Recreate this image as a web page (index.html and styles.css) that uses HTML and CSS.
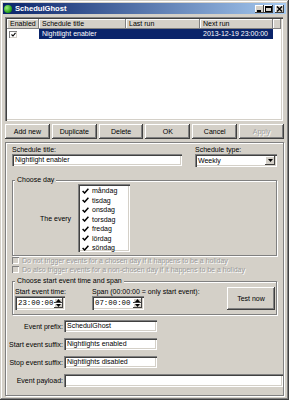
FILE: index.html
```html
<!DOCTYPE html>
<html lang="en">
<head>
    <meta charset="UTF-8">
    <title>SchedulGhost</title>
    <link rel="stylesheet" href="styles.css">
</head>
<body>
    <div class="window">
        <div class="titlebar">
            <span class="app-icon"></span>
            <span class="title">SchedulGhost</span>
            <div class="caption-buttons">
                <span class="cap-btn"><svg width="7" height="6" viewBox="0 0 7 6"><rect x="1" y="4" width="4" height="2" fill="#000"/></svg></span>
                <span class="cap-btn"><svg width="7" height="6" viewBox="0 0 7 6"><rect x="0.5" y="0.5" width="6" height="5" fill="none" stroke="#000"/><rect x="0" y="0" width="7" height="2" fill="#000"/></svg></span>
                <span class="cap-btn close"><svg width="7" height="6" viewBox="0 0 7 6"><path d="M1 0.5 L6 5.5 M6 0.5 L1 5.5" stroke="#000" stroke-width="1.4"/></svg></span>
            </div>
        </div>

        <div class="list">
            <div class="list-grid">
                <div class="head">Enabled</div>
                <div class="head">Schedule title</div>
                <div class="head">Last run</div>
                <div class="head">Next run</div>
                <div class="head"></div>

                <div class="cell check-cell">
                    <span class="cbox"><svg width="5" height="5" viewBox="0 0 5 5"><path d="M0.5 2.5 L2 4 L4.5 0.8" fill="none" stroke="#000" stroke-width="1.1"/></svg></span>
                </div>
                <div class="cell sel">Nightlight enabler</div>
                <div class="cell sel"></div>
                <div class="cell sel">2013-12-19 23:00:00</div>
                <div class="cell"></div>
            </div>
        </div>

        <div class="button-row">
            <button class="btn">Add new</button>
            <button class="btn">Duplicate</button>
            <button class="btn">Delete</button>
            <button class="btn">OK</button>
            <button class="btn">Cancel</button>
            <button class="btn" disabled>Apply</button>
        </div>

        <div class="panel">
            <div class="top-row">
                <div class="field">
                    <div class="label">Schedule title:</div>
                    <div class="textbox">Nightlight enabler</div>
                </div>
                <div class="field">
                    <div class="label">Schedule type:</div>
                    <div class="select">
                        <span>Weekly</span>
                        <span class="drop"><svg width="5" height="3" viewBox="0 0 5 3"><path d="M0 0 H5 L2.5 3 Z" fill="#000"/></svg></span>
                    </div>
                </div>
            </div>

            <fieldset class="group day-group">
                <legend>Choose day</legend>
                <div class="day-row">
                    <div class="every">The every</div>
                    <div class="checklist">
                        <div class="day"><svg width="7" height="6" viewBox="0 0 7 6"><path d="M0.6 3 L2.6 5 L6.4 0.8" fill="none" stroke="#000" stroke-width="1.5"/></svg>måndag</div>
                        <div class="day"><svg width="7" height="6" viewBox="0 0 7 6"><path d="M0.6 3 L2.6 5 L6.4 0.8" fill="none" stroke="#000" stroke-width="1.5"/></svg>tisdag</div>
                        <div class="day"><svg width="7" height="6" viewBox="0 0 7 6"><path d="M0.6 3 L2.6 5 L6.4 0.8" fill="none" stroke="#000" stroke-width="1.5"/></svg>onsdag</div>
                        <div class="day"><svg width="7" height="6" viewBox="0 0 7 6"><path d="M0.6 3 L2.6 5 L6.4 0.8" fill="none" stroke="#000" stroke-width="1.5"/></svg>torsdag</div>
                        <div class="day"><svg width="7" height="6" viewBox="0 0 7 6"><path d="M0.6 3 L2.6 5 L6.4 0.8" fill="none" stroke="#000" stroke-width="1.5"/></svg>fredag</div>
                        <div class="day"><svg width="7" height="6" viewBox="0 0 7 6"><path d="M0.6 3 L2.6 5 L6.4 0.8" fill="none" stroke="#000" stroke-width="1.5"/></svg>lördag</div>
                        <div class="day"><svg width="7" height="6" viewBox="0 0 7 6"><path d="M0.6 3 L2.6 5 L6.4 0.8" fill="none" stroke="#000" stroke-width="1.5"/></svg>söndag</div>
                    </div>
                </div>
            </fieldset>

            <div class="disabled-check"><span class="dbox"></span>Do not trigger events for a chosen day if it happens to be a holiday</div>
            <div class="disabled-check"><span class="dbox"></span>Do also trigger events for a non-chosen day if it happens to be a holiday</div>

            <fieldset class="group time-group">
                <legend>Choose start event time and span</legend>
                <div class="time-row">
                    <div class="time-col">
                        <div class="label">Start event time:</div>
                        <div class="spinner">
                            <span class="spin-text">23:00:00</span>
                            <span class="spin-btns">
                                <span class="spin-btn"><svg width="5" height="3" viewBox="0 0 5 3"><path d="M0 3 H5 L2.5 0 Z" fill="#000"/></svg></span>
                                <span class="spin-btn"><svg width="5" height="3" viewBox="0 0 5 3"><path d="M0 0 H5 L2.5 3 Z" fill="#000"/></svg></span>
                            </span>
                        </div>
                    </div>
                    <div class="time-col span-col">
                        <div class="label">Span (00:00:00 = only start event):</div>
                        <div class="spinner">
                            <span class="spin-text">07:00:00</span>
                            <span class="spin-btns">
                                <span class="spin-btn"><svg width="5" height="3" viewBox="0 0 5 3"><path d="M0 3 H5 L2.5 0 Z" fill="#000"/></svg></span>
                                <span class="spin-btn"><svg width="5" height="3" viewBox="0 0 5 3"><path d="M0 0 H5 L2.5 3 Z" fill="#000"/></svg></span>
                            </span>
                        </div>
                    </div>
                    <button class="btn test-btn">Test now</button>
                </div>
            </fieldset>

            <div class="event-rows">
                <div class="ev-label">Event prefix:</div>
                <div class="textbox ev-input">SchedulGhost</div>
                <div class="ev-label">Start event suffix:</div>
                <div class="textbox ev-input">Nightlights enabled</div>
                <div class="ev-label">Stop event suffix:</div>
                <div class="textbox ev-input">Nightlights disabled</div>
                <div class="ev-label">Event payload:</div>
                <div class="textbox ev-input payload"></div>
            </div>
        </div>
    </div>
</body>
</html>
```

FILE: styles.css
```css
body {
    margin: 0;
    font-family: 'Liberation Sans', Arial, sans-serif;
    font-size: 7px;
    color: #000;
    background-color: #d4d0c8;
}

.window {
    width: 289px;
    height: 400px;
    box-sizing: border-box;
    padding: 3px 3px 0 3px;
    background-color: #d4d0c8;
    box-shadow: inset -1px -1px #404040, inset 1px 1px #d4d0c8, inset -2px -2px #808080, inset 2px 2px #fff;
    overflow: hidden;
}

/* Barra de titulo */
.titlebar {
    height: 11px;
    display: flex;
    align-items: center;
    background: linear-gradient(to right, #0a246a, #a6caf0);
    color: #fff;
}

.app-icon {
    width: 8px;
    height: 8px;
    margin-left: 1px;
    border-radius: 50%;
    background: radial-gradient(circle at 35% 35%, #9cf07a, #1f9a12 70%, #0d5a08);
}

.title {
    font-weight: bold;
    font-size: 7.6px;
    margin-left: 3px;
}

.caption-buttons {
    margin-left: auto;
    margin-right: 2px;
    display: flex;
    gap: 0;
}

.cap-btn {
    width: 9px;
    height: 8px;
    display: flex;
    align-items: center;
    justify-content: center;
    background-color: #d4d0c8;
    box-shadow: inset -1px -1px #404040, inset 1px 1px #fff;
}

.cap-btn.close {
    margin-left: 2px;
}

/* Lista */
.list {
    margin: 3px 3px 0 2px;
    height: 104px;
    box-sizing: border-box;
    padding: 2px;
    background-color: #fff;
    box-shadow: inset 1px 1px #808080, inset 2px 2px #404040, inset -1px -1px #fff, inset -2px -2px #d4d0c8;
}

.list-grid {
    display: grid;
    grid-template-columns: 32px 87px 74px 73px 1fr;
    grid-auto-rows: 10px;
}

.head {
    background-color: #d4d0c8;
    box-shadow: inset -1px -1px #808080, inset 1px 1px #fff;
    padding-left: 3px;
    line-height: 10px;
    white-space: nowrap;
    overflow: hidden;
}

.cell {
    line-height: 10px;
    padding-left: 3px;
    white-space: nowrap;
}

.cell.sel {
    background-color: #0a246a;
    color: #fff;
}

.check-cell {
    display: flex;
    align-items: center;
    padding-left: 2px;
}

.cbox {
    width: 8px;
    height: 7px;
    display: flex;
    align-items: center;
    justify-content: center;
    background-color: #fff;
    box-shadow: inset 1px 1px #808080, inset -1px -1px #d4d0c8;
}

/* Botones */
.button-row {
    display: flex;
    gap: 2px;
    margin: 3px 2px 0 2px;
}

.btn {
    font-family: inherit;
    font-size: 7px;
    color: #000;
    height: 15px;
    padding: 0;
    border: none;
    background-color: #d4d0c8;
    box-shadow: inset -1px -1px #404040, inset 1px 1px #fff, inset -2px -2px #808080;
}

.button-row .btn {
    flex: 1;
}

.btn:disabled {
    color: #a0a0a0;
    text-shadow: 1px 1px #fff;
}

/* Panel inferior */
.panel {
    margin: 3px 2px 0 2px;
    height: 254px;
    box-sizing: border-box;
    border: 1px solid #808080;
    box-shadow: inset 1px 1px #fff, 1px 1px #fff;
    padding: 3px 6px 0 6px;
}

.top-row {
    display: grid;
    grid-template-columns: 170px 1fr;
    gap: 13px;
}

.label {
    height: 8px;
    line-height: 8px;
    white-space: nowrap;
}

.textbox {
    height: 12px;
    line-height: 12px;
    margin-top: 0;
    box-sizing: border-box;
    padding-left: 3px;
    background-color: #fff;
    white-space: nowrap;
    overflow: hidden;
    box-shadow: inset 1px 1px #808080, inset 2px 2px #404040, inset -1px -1px #fff, inset -2px -2px #d4d0c8;
}

.field .textbox {
    margin-top: 0;
}

.select {
    height: 13px;
    display: flex;
    align-items: center;
    box-sizing: border-box;
    padding: 2px 2px 2px 3px;
    background-color: #fff;
    box-shadow: inset 1px 1px #808080, inset 2px 2px #404040, inset -1px -1px #fff, inset -2px -2px #d4d0c8;
}

.drop {
    margin-left: auto;
    width: 10px;
    height: 9px;
    display: flex;
    align-items: center;
    justify-content: center;
    background-color: #d4d0c8;
    box-shadow: inset -1px -1px #404040, inset 1px 1px #fff;
}

/* Grupos */
.group {
    margin: 0;
    padding: 0;
    border: 1px solid #808080;
    box-shadow: inset 1px 1px #fff, 1px 1px #fff;
}

.group legend {
    padding: 0 2px;
    margin-left: 2px;
    line-height: 8px;
    background-color: #d4d0c8;
}

.day-group {
    margin-top: 9px;
    height: 80px;
    box-sizing: border-box;
}

.day-row {
    display: flex;
    align-items: center;
    padding-left: 27px;
}

.every {
    width: 38px;
}

.checklist {
    width: 52px;
    height: 68px;
    box-sizing: border-box;
    padding: 2px 0 0 2px;
    overflow: hidden;
    background-color: #fff;
    box-shadow: inset 1px 1px #808080, inset 2px 2px #404040, inset -1px -1px #fff, inset -2px -2px #d4d0c8;
}

.day {
    height: 9.5px;
    line-height: 9.5px;
    display: flex;
    align-items: center;
    gap: 3px;
    padding-left: 2px;
}

.disabled-check {
    display: flex;
    align-items: center;
    height: 9px;
    gap: 3px;
    color: #9a9a9a;
    text-shadow: 1px 1px #fff;
    white-space: nowrap;
}

.disabled-check:first-of-type {
    margin-top: 3px;
}

.dbox {
    width: 7px;
    height: 7px;
    box-sizing: border-box;
    background-color: #d4d0c8;
    box-shadow: inset 1px 1px #808080, inset -1px -1px #fff;
}

.time-group {
    margin-top: 3px;
}

.time-row {
    display: flex;
    align-items: flex-end;
    padding: 2px 1px 4px 2px;
}

.time-col {
    width: 77px;
}

.span-col {
    width: 100px;
}

.spinner {
    width: 50px;
    height: 14px;
    display: flex;
    align-items: center;
    box-sizing: border-box;
    padding: 2px;
    background-color: #fff;
    box-shadow: inset 1px 1px #808080, inset 2px 2px #404040, inset -1px -1px #fff, inset -2px -2px #d4d0c8;
}

.span-col .spinner {
    width: 52px;
}

.spin-text {
    font-family: 'Liberation Mono', monospace;
    font-size: 7.4px;
    padding-left: 1px;
}

.spin-btns {
    margin-left: auto;
    display: flex;
    flex-direction: column;
}

.spin-btn {
    width: 9px;
    height: 5px;
    display: flex;
    align-items: center;
    justify-content: center;
    background-color: #d4d0c8;
    box-shadow: inset -1px -1px #404040, inset 1px 1px #fff;
}

.test-btn {
    margin-left: auto;
    width: 48px;
    height: 23px;
}

/* Eventos */
.event-rows {
    display: grid;
    grid-template-columns: 58px 93px;
    row-gap: 6px;
    align-items: center;
    margin: 5px 0 0 -6px;
}

.ev-label {
    text-align: right;
    white-space: nowrap;
    padding-right: 1px;
}

.ev-input {
    height: 12px;
    line-height: 12px;
}

.payload {
    width: 219px;
    height: 13px;
}
```
